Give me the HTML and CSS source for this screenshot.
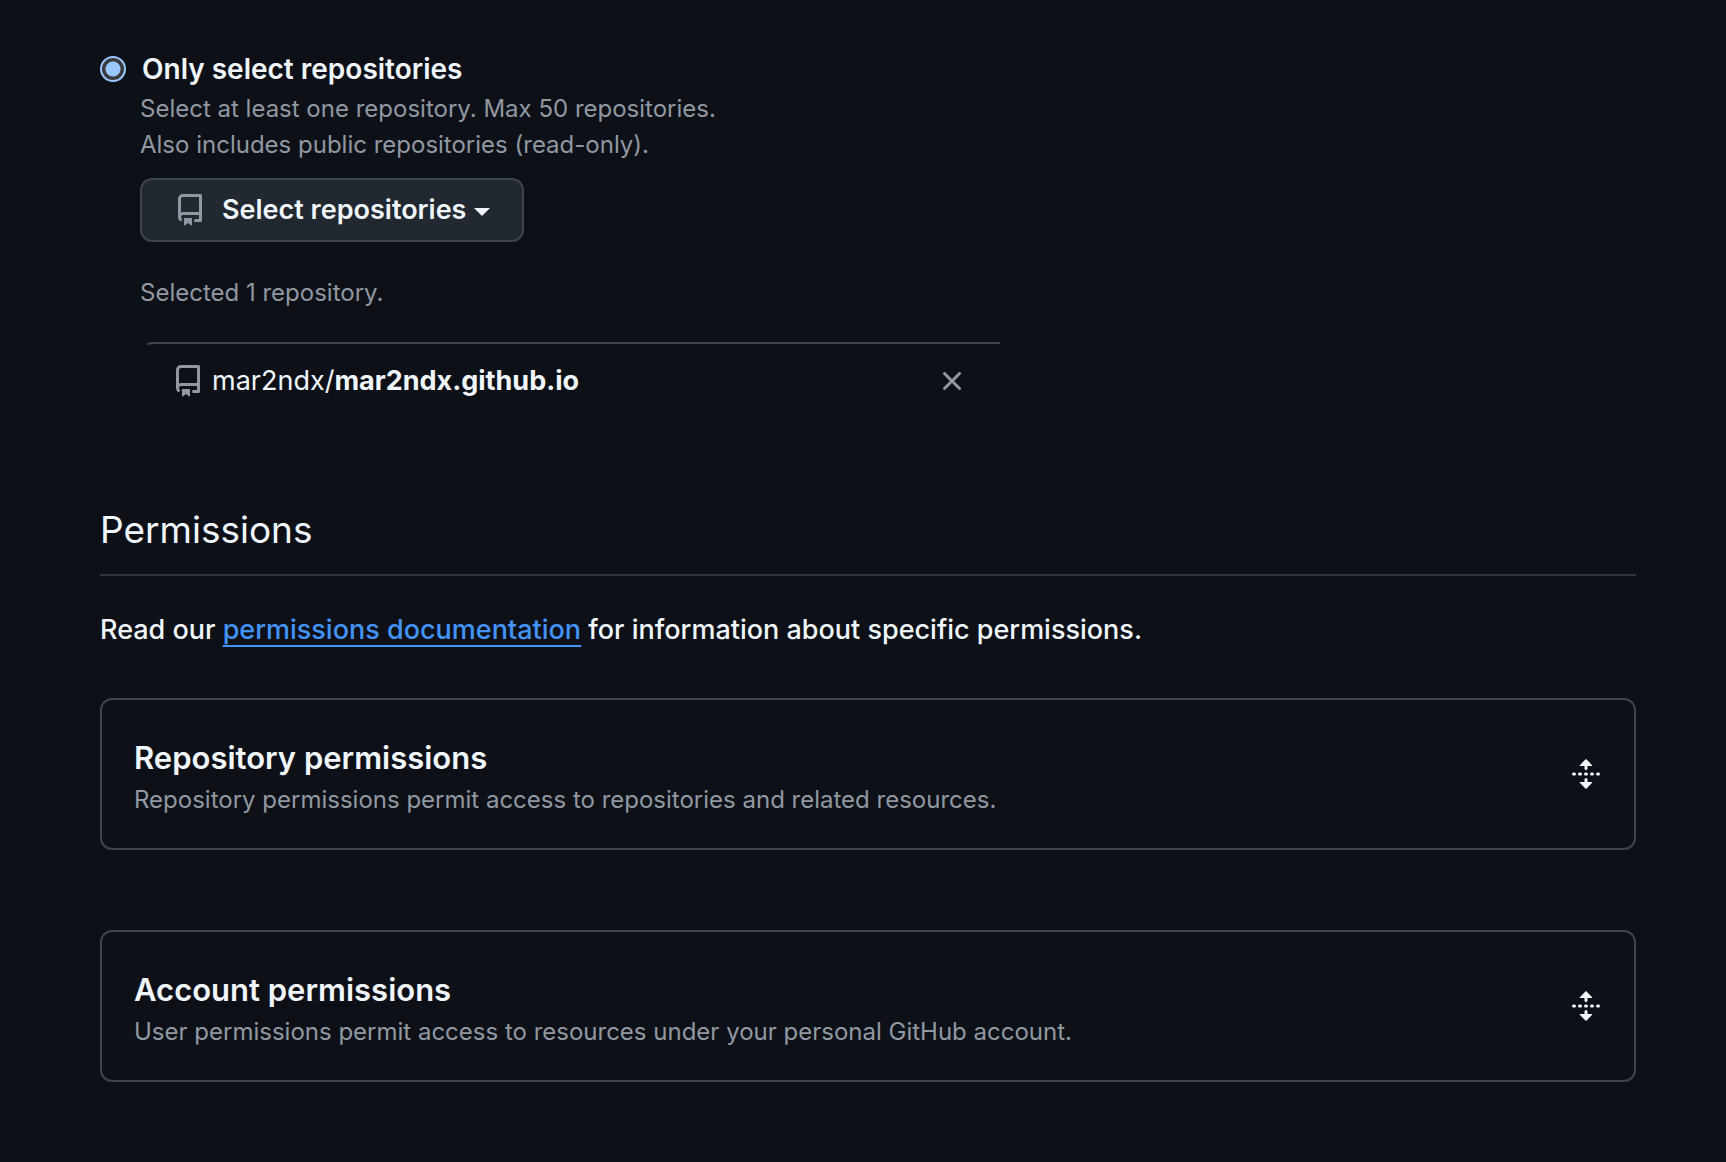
FILE: index.html
```html
<!DOCTYPE html>
<html lang="en">
<head>
<meta charset="utf-8">
<meta name="viewport" content="width=device-width, initial-scale=1">
<title>Repository access and permissions</title>
<link rel="stylesheet" href="styles.css">
</head>
<body>
<svg class="sprite" aria-hidden="true">
  <symbol id="icon-repo" viewBox="0 0 16 16"><path d="M2 2.5A2.5 2.5 0 0 1 4.5 0h8.75a.75.75 0 0 1 .75.75v12.5a.75.75 0 0 1-.75.75h-2.5a.75.75 0 0 1 0-1.5h1.75v-2h-8a1 1 0 0 0-.714 1.7.75.75 0 1 1-1.072 1.05A2.495 2.495 0 0 1 2 11.5Zm10.5-1h-8a1 1 0 0 0-1 1v6.708A2.486 2.486 0 0 1 4.5 9h8ZM5 12.25a.25.25 0 0 1 .25-.25h3.5a.25.25 0 0 1 .25.25v3.25a.25.25 0 0 1-.4.2l-1.45-1.087a.249.249 0 0 0-.3 0L5.4 15.7a.25.25 0 0 1-.4-.2Z"/></symbol>
  <symbol id="icon-x" viewBox="0 0 16 16"><path d="M3.72 3.72a.75.75 0 0 1 1.06 0L8 6.94l3.22-3.22a.749.749 0 0 1 1.275.326.749.749 0 0 1-.215.734L9.06 8l3.22 3.22a.749.749 0 0 1-.326 1.275.749.749 0 0 1-.734-.215L8 9.06l-3.22 3.22a.751.751 0 0 1-1.042-.018.751.751 0 0 1-.018-1.042L6.94 8 3.72 4.78a.75.75 0 0 1 0-1.06Z"/></symbol>
  <symbol id="icon-unfold" viewBox="0 0 16 16"><path d="m8.177.677 2.896 2.896a.25.25 0 0 1-.177.427H8.75v1.25a.75.75 0 0 1-1.5 0V4H5.104a.25.25 0 0 1-.177-.427L7.823.677a.25.25 0 0 1 .354 0ZM7.25 10.75a.75.75 0 0 1 1.5 0V12h2.146a.25.25 0 0 1 .177.427l-2.896 2.896a.25.25 0 0 1-.354 0l-2.896-2.896A.25.25 0 0 1 5.104 12H7.25v-1.25Zm-5-2a.75.75 0 0 0 0-1.5h-.5a.75.75 0 0 0 0 1.5h.5ZM6 8a.75.75 0 0 1-.75.75h-.5a.75.75 0 0 1 0-1.5h.5A.75.75 0 0 1 6 8Zm2.25.75a.75.75 0 0 0 0-1.5h-.5a.75.75 0 0 0 0 1.5h.5ZM12 8a.75.75 0 0 1-.75.75h-.5a.75.75 0 0 1 0-1.5h.5A.75.75 0 0 1 12 8Zm2.25.75a.75.75 0 0 0 0-1.5h-.5a.75.75 0 0 0 0 1.5h.5Z"/></symbol>
</svg>
<main class="page">
  <section class="access">
    <div class="choice">
      <input class="radio" type="radio" name="access" id="access-selected" aria-describedby="access-note" checked>
      <label class="choice-label" for="access-selected">Only select repositories</label>
    </div>
    <div class="access-body">
      <p class="note" id="access-note">Select at least one repository. Max 50 repositories.<br>Also includes public repositories (read-only).</p>
      <button class="picker" type="button" aria-haspopup="true">
        <svg class="icon"><use href="#icon-repo"/></svg>
        <span class="picker-text">Select repositories<span class="caret"></span></span>
      </button>
      <p class="note">Selected 1 repository.</p>
      <ul class="repo-list">
        <li class="repo">
          <svg class="icon icon-muted"><use href="#icon-repo"/></svg>
          <span class="repo-name">mar2ndx/<strong>mar2ndx.github.io</strong></span>
          <button class="icon-button icon-muted" type="button" aria-label="Remove mar2ndx.github.io"><svg class="icon"><use href="#icon-x"/></svg></button>
        </li>
      </ul>
    </div>
  </section>

  <section class="permissions">
    <h2 class="heading">Permissions</h2>
    <p class="intro">Read our <a class="link" href="#">permissions documentation</a> for information about specific permissions.</p>
    <div class="cards">
      <section class="card">
        <div class="card-text">
          <h3 class="card-title">Repository permissions</h3>
          <p class="note">Repository permissions permit access to repositories and related resources.</p>
        </div>
        <button class="icon-button" type="button" aria-expanded="false" aria-label="Expand repository permissions"><svg class="icon"><use href="#icon-unfold"/></svg></button>
      </section>
      <section class="card">
        <div class="card-text">
          <h3 class="card-title">Account permissions</h3>
          <p class="note">User permissions permit access to resources under your personal GitHub account.</p>
        </div>
        <button class="icon-button" type="button" aria-expanded="false" aria-label="Expand account permissions"><svg class="icon"><use href="#icon-unfold"/></svg></button>
      </section>
    </div>
  </section>
</main>
</body>
</html>
```
FILE: styles.css
```css
:root {
  --bg: #0d1117;
  --fg: #f0f6fc;
  --muted: #9198a1;
  --border: #3d444d;
}

* { box-sizing: border-box; }

body {
  margin: 0;
  background: var(--bg);
  color: var(--fg);
  font: 27px/42px Inter, "Liberation Sans", sans-serif;
}

h2, h3, p, ul { margin: 0; padding: 0; }

button { font: inherit; color: inherit; cursor: pointer; }

.sprite { display: none; }

.page { padding: 48px 90px 80px 100px; }

.icon {
  display: block;
  flex: none;
  width: 32px;
  height: 32px;
  fill: currentColor;
}

.icon-button {
  flex: none;
  margin-left: auto;
  padding: 0;
  border: 0;
  background: none;
}

.icon-muted { color: var(--muted); }

.choice {
  display: flex;
  align-items: center;
  gap: 16px;
}

.radio {
  appearance: none;
  flex: none;
  width: 26px;
  height: 26px;
  margin: 0;
  border: 2px solid #99c8ff;
  border-radius: 50%;
  background: radial-gradient(circle, #99c8ff 7px, #3b3b3b 8px);
}

.choice-label {
  font-size: 28px;
  font-weight: 600;
}

.access-body { padding: 1px 0 0 40px; }

.note {
  color: var(--muted);
  font-size: 24px;
  line-height: 36px;
}

.picker {
  display: flex;
  align-items: center;
  gap: 16px;
  height: 64px;
  margin: 15px 0 33px;
  padding: 0 32px;
  border: 2px solid var(--border);
  border-radius: 12px;
  background: #212830;
  font-weight: 600;
}

.picker .icon { color: var(--muted); }

.picker-text {
  display: flex;
  align-items: center;
  gap: 8px;
}

.caret {
  margin-top: 4px;
  border: 8px solid transparent;
  border-top-color: currentColor;
  border-bottom: 0;
}

.repo-list {
  max-width: 860px;
  margin-top: 31px;
  list-style: none;
}

.repo {
  display: flex;
  align-items: center;
  gap: 8px;
  padding: 16px 32px 16px 26px;
  border-top: 2px solid var(--border);
  border-left: 6px solid transparent;
  border-top-left-radius: 12px;
}

.repo-name strong { font-weight: 700; }

.permissions { padding-top: 82px; }

.heading {
  padding-bottom: 14px;
  border-bottom: 2px solid #2f353d;
  font-size: 37px;
  font-weight: 400;
  line-height: 60px;
}

.intro {
  margin: 33px 0 47px;
  font-weight: 500;
}

.link {
  color: #4493f8;
  text-decoration: underline;
  text-decoration-thickness: 2px;
  text-underline-offset: 6px;
}

.cards {
  display: grid;
  gap: 80px;
}

.card {
  display: flex;
  align-items: center;
  padding: 30px 32px;
  border: 2px solid var(--border);
  border-radius: 12px;
}

.card-text { padding-top: 4px; }

.card-title {
  font-size: 31px;
  font-weight: 600;
  line-height: 48px;
}
```
